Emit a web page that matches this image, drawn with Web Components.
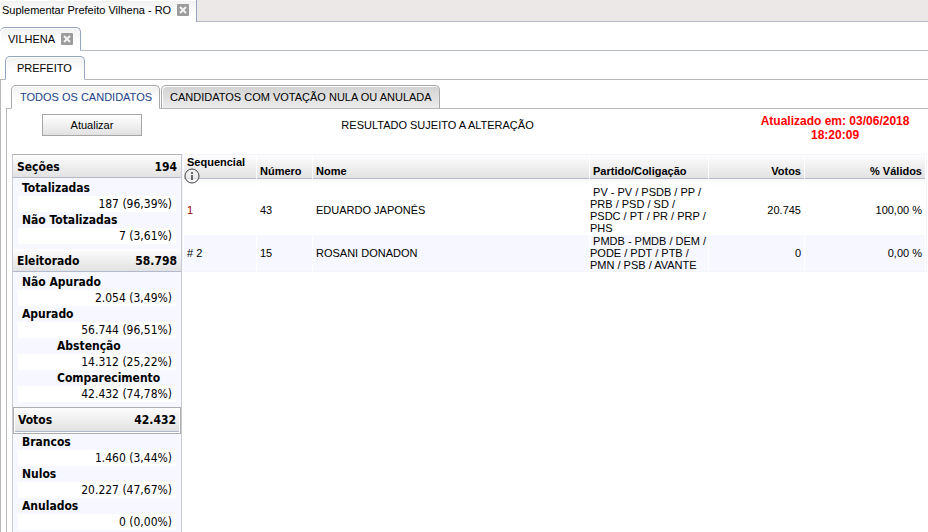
<!DOCTYPE html>
<html lang="pt-BR">
<head>
<meta charset="utf-8">
<title>Suplementar Prefeito Vilhena - RO</title>
<style>
  body {
    margin: 0;
    background: #fff;
    color: #000;
    font: 11px/16px "Liberation Sans", Arial, sans-serif;
  }
</style>
</head>
<body>
<tab-panel level="top">
  <tab-item slot="tabs" level="top" closable active>Suplementar Prefeito Vilhena - RO</tab-item>
  <tab-panel level="city">
    <tab-item slot="tabs" level="city" closable active>VILHENA</tab-item>
    <tab-panel level="office">
      <tab-item slot="tabs" level="office" active>PREFEITO</tab-item>
      <tab-panel level="list">
        <tab-item slot="tabs" level="list" active>TODOS OS CANDIDATOS</tab-item>
        <tab-item slot="tabs" level="list">CANDIDATOS COM VOTAÇÃO NULA OU ANULADA</tab-item>
        <result-toolbar updated="03/06/2018 18:20:09">RESULTADO SUJEITO A ALTERAÇÃO</result-toolbar>
        <result-layout>
          <stat-list slot="side">
            <stat-group label="Seções" total="194">
              <stat-row label="Totalizadas">187 (96,39%)</stat-row>
              <stat-row label="Não Totalizadas">7 (3,61%)</stat-row>
            </stat-group>
            <stat-group label="Eleitorado" total="58.798">
              <stat-row label="Não Apurado">2.054 (3,49%)</stat-row>
              <stat-row label="Apurado">56.744 (96,51%)</stat-row>
              <stat-row label="Abstenção" nested>14.312 (25,22%)</stat-row>
              <stat-row label="Comparecimento" nested>42.432 (74,78%)</stat-row>
            </stat-group>
            <stat-group label="Votos" total="42.432" boxed>
              <stat-row label="Brancos">1.460 (3,44%)</stat-row>
              <stat-row label="Nulos">20.227 (47,67%)</stat-row>
              <stat-row label="Anulados">0 (0,00%)</stat-row>
            </stat-group>
          </stat-list>
          <candidate-table></candidate-table>
        </result-layout>
      </tab-panel>
    </tab-panel>
  </tab-panel>
</tab-panel>

<script>
class TabPanel extends HTMLElement {
  constructor() {
    super();
    this.attachShadow({ mode: 'open' });
    this.shadowRoot.innerHTML = `
      <style>
        :host { display: block; }
        .strip {
          display: flex;
          align-items: flex-end;
          gap: 1px;
          box-sizing: border-box;
          border-bottom: 1px solid #b4b9c6;
        }
        ::slotted([slot="tabs"]) { margin-bottom: -1px; }
        :host([level="top"]) .strip { height: 22px; background: #ece8e8; }
        :host([level="city"]) .strip { height: 29px; }
        :host([level="office"]) .strip { height: 29px; padding-left: 5px; border-color: #b8b8b8; }
        :host([level="list"]) .strip { height: 29px; padding-left: 5px; border-color: #b8b8b8; }
        :host([level="office"]) .content {
          border-left: 1px solid #b8b8b8;
          padding-left: 5px;
        }
        :host([level="list"]) .content {
          border-left: 1px solid #b8b8b8;
          padding: 5px 1px 0 5px;
        }
      </style>
      <div class="strip" role="tablist"><slot name="tabs"></slot></div>
      <div class="content"><slot></slot></div>
    `;
  }
}

class TabItem extends HTMLElement {
  connectedCallback() {
    const active = this.hasAttribute('active');
    this.attachShadow({ mode: 'open' });
    this.shadowRoot.innerHTML = `
      <style>
        :host { display: block; }
        .tab {
          display: flex;
          align-items: center;
          gap: 6px;
          box-sizing: border-box;
          height: 24px;
          padding: 0 7px 0 8px;
          border: 1px solid #a8a8a8;
          border-radius: 5px 5px 0 0;
          background: linear-gradient(#d2d2d2, #ececec);
          box-shadow: inset 1px 1px #fff;
        }
        :host([active]) .tab {
          border-bottom-color: #fff;
          background: linear-gradient(#f1f1f1, #fff 70%);
        }
        :host(:not([active])) .tab { border-bottom-color: #b8b8b8; }
        button {
          border: 0;
          padding: 0;
          background: none;
          color: inherit;
          font: inherit;
          line-height: 16px;
          white-space: nowrap;
        }
        .close { display: block; width: 12px; height: 12px; }
        svg { display: block; }
        :host([level="top"]) .tab {
          border-color: #93a5c0;
          border-width: 0 1px 0 0;
          border-radius: 0;
          height: 22px;
          padding: 0 7px 2px 2px;
        }
        :host([level="city"]) .tab {
          border-color: #93a5c0 #93a5c0 #fff;
          border-left: 0;
        }
        :host([level="office"]) .tab {
          border-color: #93a5c0 #93a5c0 #fff;
          padding: 0 12px 0 11px;
        }
        :host([level="list"][active]) .tab { color: #1d4488; }
      </style>
      <div class="tab">
        <button type="button" role="tab" aria-selected="${active}"><slot></slot></button>
        ${this.hasAttribute('closable') ? `
        <button type="button" class="close" aria-label="Fechar">
          <svg width="12" height="12" viewBox="0 0 12 12" aria-hidden="true">
            <rect width="12" height="12" rx="1" fill="#9c9c9c"/>
            <path d="M3 3l6 6M9 3l-6 6" stroke="#f4f4f4" stroke-width="2"/>
          </svg>
        </button>` : ''}
      </div>
    `;
  }
}

class ResultToolbar extends HTMLElement {
  connectedCallback() {
    this.attachShadow({ mode: 'open' });
    this.shadowRoot.innerHTML = `
      <style>
        :host {
          display: grid;
          grid-template-columns: 162px 7fr 3fr;
          min-height: 40px;
        }
        .refresh {
          width: 100px;
          height: 22px;
          margin-left: 30px;
          padding: 0;
          border: 1px solid #a6a6a6;
          background: linear-gradient(#fff, #e2e2e2);
          color: #000;
          font: inherit;
        }
        .notice { padding-top: 3px; text-align: center; }
        .updated {
          padding-left: 42px;
          color: #f00;
          font-size: 12px;
          font-weight: bold;
          line-height: 14px;
          text-align: center;
        }
      </style>
      <div><button type="button" class="refresh">Atualizar</button></div>
      <div class="notice"><slot></slot></div>
      <div class="updated">Atualizado em: ${this.getAttribute('updated')}</div>
    `;
  }
}

class ResultLayout extends HTMLElement {
  constructor() {
    super();
    this.attachShadow({ mode: 'open' });
    this.shadowRoot.innerHTML = `
      <style>
        :host {
          display: grid;
          grid-template-columns: 170px 1fr;
          align-items: start;
        }
      </style>
      <slot name="side"></slot>
      <slot></slot>
    `;
  }
}

class StatList extends HTMLElement {
  constructor() {
    super();
    this.attachShadow({ mode: 'open' });
    this.shadowRoot.innerHTML = `
      <style>
        :host {
          display: block;
          border: 1px solid #c8cad6;
          border-top-color: #b0b0b0;
          background: #f7f8ff;
          font: 12px/16px "DejaVu Sans Condensed", "DejaVu Sans", Tahoma, sans-serif;
        }
      </style>
      <slot></slot>
    `;
  }
}

class StatGroup extends HTMLElement {
  connectedCallback() {
    this.attachShadow({ mode: 'open' });
    this.shadowRoot.innerHTML = `
      <style>
        :host { display: block; padding-bottom: 5px; }
        .head {
          display: flex;
          justify-content: space-between;
          margin-bottom: 2px;
          padding: 4px 4px 2px;
          border-bottom: 1px solid #b4bacb;
          background: linear-gradient(#fdfdfd, #e2e2e2);
          font-weight: bold;
        }
        :host([boxed]) .frame {
          border: 1px solid #adadad;
          background: #fff;
        }
        :host([boxed]) .head { margin: 0 1px 1px; padding: 4px 3px 3px; }
      </style>
      <div class="frame">
        <div class="head">
          <span>${this.getAttribute('label')}</span>
          <span>${this.getAttribute('total')}</span>
        </div>
      </div>
      <slot></slot>
    `;
  }
}

class StatRow extends HTMLElement {
  connectedCallback() {
    this.attachShadow({ mode: 'open' });
    this.shadowRoot.innerHTML = `
      <style>
        :host { display: block; margin: 0 5px; }
        .label { padding-left: 4px; font-weight: bold; }
        .value { padding-right: 4px; background: #fff; text-align: right; }
        :host([nested]) .label { padding-left: 39px; }
      </style>
      <div class="label">${this.getAttribute('label')}</div>
      <div class="value"><slot></slot></div>
    `;
  }
}

class CandidateTable extends HTMLElement {
  connectedCallback() {
    const rows = [
      { seq: '1', elected: true, number: '43', name: 'EDUARDO JAPONÊS', party: 'PV - PV / PSDB / PP / PRB / PSD / SD / PSDC / PT / PR / PRP / PHS', votes: '20.745', valid: '100,00 %' },
      { seq: '# 2', elected: false, number: '15', name: 'ROSANI DONADON', party: 'PMDB - PMDB / DEM / PODE / PDT / PTB / PMN / PSB / AVANTE', votes: '0', valid: '0,00 %' },
    ];

    this.attachShadow({ mode: 'open' });
    this.shadowRoot.innerHTML = `
      <style>
        :host { display: block; }
        table {
          width: 100%;
          table-layout: fixed;
          border: 1px solid #f4f5fc;
          border-spacing: 1px 0;
          line-height: 12px;
        }
        th, td { box-sizing: border-box; padding: 0 3px; text-align: left; }
        .seq { width: 72px; }
        .number { width: 55px; }
        .party { width: 118px; }
        .votes { width: 95px; }
        .valid { width: 120px; }
        th {
          height: 31px;
          background: linear-gradient(#fdfdfd, #e2e2e2 23px, #b4bacb 23px, #b4bacb 24px, #f8f8f8 24px, #fff);
        }
        td { height: 36px; }
        td.coalition { padding: 0; }
        .num { text-align: right; }
        tbody tr:nth-child(even) td { background: #f7f8ff; }
        tbody tr:nth-child(odd) td { border-bottom: 1px solid #fff; }
        .elected { color: #900; }
        th.seq { padding: 0 0 2px; }
        th.seq span { padding-left: 3px; }
        svg { display: block; }
      </style>
      <table>
        <thead>
          <tr>
            <th class="seq"><span>Sequencial</span>
              <svg width="16" height="16" viewBox="0 0 16 16" role="img" aria-label="Informação">
                <circle cx="8" cy="8" r="7" fill="#f4f4f4" fill-opacity="0.6" stroke="#444"/>
                <path d="M8 4v2M8 7v5" stroke="#222" stroke-width="1.3"/>
              </svg>
            </th>
            <th class="number">Número</th>
            <th>Nome</th>
            <th class="party">Partido/Coligação</th>
            <th class="votes num">Votos</th>
            <th class="valid num">% Válidos</th>
          </tr>
        </thead>
        <tbody>
          ${rows.map(row => `
          <tr>
            <td class="${row.elected ? 'elected' : ''}">${row.seq}</td>
            <td>${row.number}</td>
            <td>${row.name}</td>
            <td class="coalition">&nbsp;${row.party}</td>
            <td class="num">${row.votes}</td>
            <td class="num">${row.valid}</td>
          </tr>`).join('')}
        </tbody>
      </table>
    `;
  }
}

customElements.define('tab-panel', TabPanel);
customElements.define('tab-item', TabItem);
customElements.define('result-toolbar', ResultToolbar);
customElements.define('result-layout', ResultLayout);
customElements.define('stat-list', StatList);
customElements.define('stat-group', StatGroup);
customElements.define('stat-row', StatRow);
customElements.define('candidate-table', CandidateTable);
</script>
</body>
</html>
